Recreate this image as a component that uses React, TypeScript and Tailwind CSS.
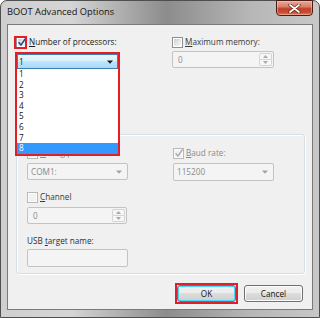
import React from "react";

function Check({ checked, disabled }: { checked?: boolean; disabled?: boolean }) {
  return (
    <span
      className={
        disabled
          ? "relative flex h-[11px] w-[11px] shrink-0 border border-[#b9b9b9] bg-[#fcfcfc] p-[1px]"
          : "relative flex h-[11px] w-[11px] shrink-0 border border-[#8e8f8f] bg-white p-[1px]"
      }
    >
      <span
        className={
          disabled
            ? "flex-1 bg-[#f2f2f2]"
            : "flex-1 bg-[linear-gradient(135deg,#c9cdd2_0%,#e4e6e8_50%,#f8f8f8_100%)]"
        }
      />
      {checked && (
        <svg className="absolute left-[0px] top-[-1px]" width="10" height="10" viewBox="0 0 10 10">
          <path
            d="M1.6 5.2 L4 8 L8.6 1.4"
            fill="none"
            stroke={disabled ? "#b0b0b0" : "#30468e"}
            strokeWidth="1.6"
          />
        </svg>
      )}
    </span>
  );
}

function DownArrow({ color }: { color: string }) {
  return (
    <svg width="6" height="4" viewBox="0 0 6 4">
      <path d="M0 0.5H6L3 3.8Z" fill={color} />
    </svg>
  );
}

function Combo({ text, wide }: { text: string; wide?: boolean }) {
  return (
    <div
      className={
        wide
          ? "flex h-[18px] w-[101px] items-center justify-between rounded-[2px] border border-[#c3c3c3] bg-[#f4f4f4] pl-[3px] pr-[5px] text-[#8a8a8a]"
          : "flex h-[17px] w-[101px] items-center justify-between rounded-[2px] border border-[#c3c3c3] bg-[#f4f4f4] pl-[3px] pr-[5px] text-[#8a8a8a]"
      }
    >
      <span className="leading-[12px]">{text}</span>
      <DownArrow color="#a3a3a3" />
    </div>
  );
}

function Spinner({ wide }: { wide?: boolean }) {
  return (
    <div
      className={
        wide
          ? "flex h-[17px] w-[102px] rounded-[2px] border border-[#c3c3c3] bg-[#f4f4f4]"
          : "flex h-[17px] w-[100px] rounded-[2px] border border-[#c3c3c3] bg-[#f4f4f4]"
      }
    >
      <span className="flex-1 pl-[5px] leading-[15px] text-[#8a8a8a]">0</span>
      <div className="my-[1px] mr-[1px] flex w-[13px] flex-col">
        <div className="flex flex-1 items-center justify-center rounded-t-[2px] border border-[#d4d4d4] bg-[#f7f7f7]">
          <svg width="5" height="3" viewBox="0 0 5 3">
            <path d="M0 3H5L2.5 0Z" fill="#a9a9a9" />
          </svg>
        </div>
        <div className="flex flex-1 items-center justify-center rounded-b-[2px] border border-t-0 border-[#d4d4d4] bg-[#f7f7f7]">
          <svg width="5" height="3" viewBox="0 0 5 3">
            <path d="M0 0H5L2.5 3Z" fill="#a9a9a9" />
          </svg>
        </div>
      </div>
    </div>
  );
}

function CloseButton() {
  return (
    <div className="-mt-[1px] flex h-[16px] w-[37px] items-center justify-center rounded-b-[4px] border border-[#4a1d15] bg-[linear-gradient(180deg,#e9a999_0%,#d9806c_40%,#c4412a_55%,#c94a31_80%,#dc7a5e_100%)] shadow-[inset_0_0_0_1px_rgba(255,210,200,0.45)]">
      <svg width="13" height="9" viewBox="0 0 13 9">
        <path d="M2 1 L11 8 M11 1 L2 8" stroke="#5a2318" strokeWidth="3.2" strokeLinecap="round" />
        <path d="M2 1 L11 8 M11 1 L2 8" stroke="#ffffff" strokeWidth="1.7" strokeLinecap="round" />
      </svg>
    </div>
  );
}

function Button({ label, isDefault }: { label: string; isDefault?: boolean }) {
  return (
    <div
      className={
        isDefault
          ? "flex h-[17px] w-[59px] items-center justify-center rounded-[3px] border border-[#3c7fb1] bg-[linear-gradient(180deg,#f2f2f2_0%,#ebebeb_50%,#dddddd_50%,#cfcfcf_100%)] shadow-[inset_0_0_0_1px_#48d8fb] text-[#111]"
          : "flex h-[17px] w-[59px] items-center justify-center rounded-[3px] border border-[#707070] bg-[linear-gradient(180deg,#f2f2f2_0%,#ebebeb_50%,#dddddd_50%,#cfcfcf_100%)] shadow-[inset_0_0_0_1px_#fbfbfb] text-[#111]"
      }
    >
      <span className="leading-[12px]">{label}</span>
    </div>
  );
}

export default function App() {
  const items = ["1", "2", "3", "4", "5", "6", "7", "8"];
  return (
    <div className="h-[318px] w-[320px] overflow-hidden font-['Open_Sans','Liberation_Sans',sans-serif] text-[8.2px] text-[#1b1b1b]">
      <div className="flex h-full w-full flex-col rounded-t-[7px] border border-[#4f4f4f] bg-[linear-gradient(90deg,#cfcfcf_0%,#d5d5d5_22%,#8c8c8c_52%,#b6b6b6_78%,#c8c8c8_100%)] px-[6px] pb-[7px]">
        <div className="flex h-[23px] shrink-0 items-start justify-between">
          <span className="pt-[4px] text-[9.3px] leading-[14px] text-[#141414]">BOOT Advanced Options</span>
          <CloseButton />
        </div>

        <div className="relative flex flex-1 flex-col border border-[#7a7a7a] bg-[#f0f0f0] pl-[8px] pr-[8px] pt-[12px]">
          {/* top section */}
          <div className="flex">
            <div className="flex w-[156px] flex-col gap-[3px]">
              <div className="flex h-[11px] items-center gap-[2px]">
                <Check checked />
                <span className="-mt-[3px] leading-[11px]">
                  <u>N</u>umber of processors:
                </span>
              </div>
              <div className="h-[17px]" />
            </div>
            <div className="flex flex-col gap-[3px]">
              <div className="flex h-[11px] items-center gap-[2px]">
                <Check />
                <span className="-mt-[3px] leading-[11px] text-[#3a3a3a]">
                  <u>M</u>aximum memory:
                </span>
              </div>
              <Spinner wide />
            </div>
          </div>

          {/* group box */}
          <div className="mt-[66px] h-[140px] w-[289px] rounded-[3px] border border-[#d5dfe5] pl-[10px] pt-[13px] shadow-[inset_1px_1px_0_#ffffff,1px_1px_0_#ffffff]">
            <div className="flex">
              <div className="flex w-[146px] flex-col">
                <div className="flex h-[11px] items-center gap-[2px]">
                  <Check disabled />
                  <span className="-mt-[3px] leading-[11px] text-[#8a8a8a]">
                    <u>D</u>ebug port:
                  </span>
                </div>
                <div className="mt-[4px]">
                  <Combo text="COM1:" />
                </div>
                <div className="mt-[12px] flex h-[11px] items-center gap-[2px]">
                  <Check disabled />
                  <span className="-mt-[3px] leading-[11px] text-[#3a3a3a]">
                    <u>C</u>hannel
                  </span>
                </div>
                <div className="mt-[4px]">
                  <Spinner />
                </div>
                <div className="mt-[12px] h-[10px] leading-[10px] text-[#2b2f3a]">
                  USB <u>t</u>arget name:
                </div>
                <div className="mt-[3px] h-[18px] w-[101px] rounded-[2px] border border-[#c3c3c3] bg-[#f4f4f4]" />
              </div>
              <div className="flex flex-col">
                <div className="flex h-[11px] items-center gap-[2px]">
                  <Check checked disabled />
                  <span className="-mt-[3px] leading-[11px] text-[#8a8a8a]">
                    <u>B</u>aud rate:
                  </span>
                </div>
                <div className="mt-[4px]">
                  <Combo text="115200" wide />
                </div>
              </div>
            </div>
          </div>

          {/* buttons */}
          <div className="mt-[9px] flex items-center justify-end gap-[6px] pr-[1px]">
            <div className="border-2 border-[#e31e24]">
              <Button label="OK" isDefault />
            </div>
            <Button label="Cancel" />
          </div>

          {/* annotation: checkbox highlight */}
          <div className="absolute left-[6px] top-[11px] h-[13px] w-[13px] border-2 border-[#e31e24]" />

          {/* open dropdown list */}
          <div className="absolute left-[7px] top-[27px] flex w-[105px] flex-col border-2 border-[#e31e24] bg-white">
            <div className="flex h-[15px] items-center justify-between border border-[#3c7fb1] bg-[linear-gradient(180deg,#eaf6fd_0%,#d9f0fc_45%,#bee6fd_50%,#a7d9f5_100%)] pl-[1px] pr-[4px]">
              <span className="leading-[12px] text-[#111]">1</span>
              <DownArrow color="#1a1a1a" />
            </div>
            {items.map((n) => (
              <div
                key={n}
                className={
                  n === "8"
                    ? "h-[10.6px] bg-[#3399ff] pl-[2px] leading-[10.6px] text-white"
                    : "h-[10.6px] pl-[2px] leading-[10.6px] text-[#111]"
                }
              >
                {n}
              </div>
            ))}
          </div>
        </div>
      </div>
    </div>
  );
}
